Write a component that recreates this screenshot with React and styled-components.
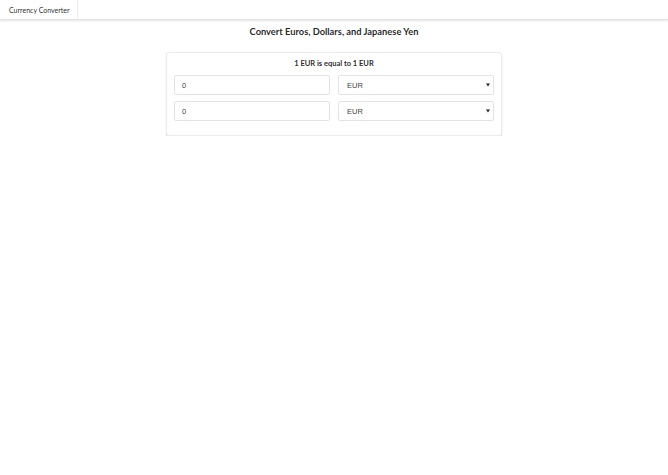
import React from "react";
import styled, { createGlobalStyle } from "styled-components";

const Global = createGlobalStyle`
  html, body { margin: 0; padding: 0; background: #fff; }
  body { font-family: Lato, "Open Sans", sans-serif; color: rgba(0,0,0,0.87); }
  * { box-sizing: border-box; }
`;

const Menu = styled.nav`
  display: flex;
  height: 20px;
  background: #fff;
  border-bottom: 1px solid #e3e3e5;
  box-shadow: 0 1px 2px rgba(34, 36, 38, 0.12);
`;

const MenuItem = styled.div`
  display: flex;
  align-items: center;
  padding: 0 7px 0 9px;
  font-size: 7px;
  color: rgba(0,0,0,0.87);
  border-right: 1px solid #ececec;
`;

const Main = styled.main`
  display: flex;
  flex-direction: column;
  align-items: center;
  padding-top: 5px;
`;

const Title = styled.h3`
  margin: 0;
  font-size: 9.3px;
  font-weight: 700;
  line-height: 14px;
  color: rgba(0,0,0,0.87);
`;

const Card = styled.section`
  margin-top: 13px;
  width: 336px;
  background: #fff;
  border: 1px solid #ebebed;
  border-radius: 3px;
  box-shadow: 0 2px 0 0 #e6e6e8, 0 1px 3px rgba(0, 0, 0, 0.06);
  padding: 5px 7px 14px 7px;
  display: flex;
  flex-direction: column;
  gap: 6px;
`;

const Rate = styled.div`
  text-align: center;
  font-size: 7.5px;
  font-weight: 700;
  line-height: 11px;
  color: rgba(0,0,0,0.87);
`;

const Row = styled.div`
  display: grid;
  grid-template-columns: 1fr 1fr;
  gap: 8px;
`;

const Field = styled.input`
  display: block;
  height: 20px;
  width: 100%;
  border: 1px solid #e3e3e5;
  border-radius: 2px;
  padding: 0 7px;
  font-family: "Liberation Sans", Arial, sans-serif;
  font-size: 7.5px;
  color: rgba(0,0,0,0.8);
  outline: none;
`;

const SelectWrap = styled.div`
  position: relative;
  height: 20px;
`;

const Select = styled.select`
  display: block;
  appearance: none;
  height: 20px;
  width: 100%;
  margin: 0;
  border: 1px solid #e3e3e5;
  border-radius: 2px;
  padding: 0 8px;
  background: #fff;
  font-family: "Liberation Sans", Arial, sans-serif;
  font-size: 7.5px;
  color: rgba(0,0,0,0.8);
  outline: none;
`;

const Caret = styled.span`
  position: absolute;
  right: 4px;
  top: 50%;
  transform: translateY(-50%);
  width: 0;
  height: 0;
  border-left: 2px solid transparent;
  border-right: 2px solid transparent;
  border-top: 3px solid #222;
  pointer-events: none;
`;

function CurrencyRow() {
  return (
    <Row>
      <Field defaultValue="0" />
      <SelectWrap>
        <Select defaultValue="EUR">
          <option>EUR</option>
          <option>USD</option>
          <option>JPY</option>
        </Select>
        <Caret />
      </SelectWrap>
    </Row>
  );
}

export default function App() {
  return (
    <>
      <Global />
      <Menu>
        <MenuItem>Currency Converter</MenuItem>
      </Menu>
      <Main>
        <Title>Convert Euros, Dollars, and Japanese Yen</Title>
        <Card>
          <Rate>1 EUR is equal to 1 EUR</Rate>
          <CurrencyRow />
          <CurrencyRow />
        </Card>
      </Main>
    </>
  );
}
